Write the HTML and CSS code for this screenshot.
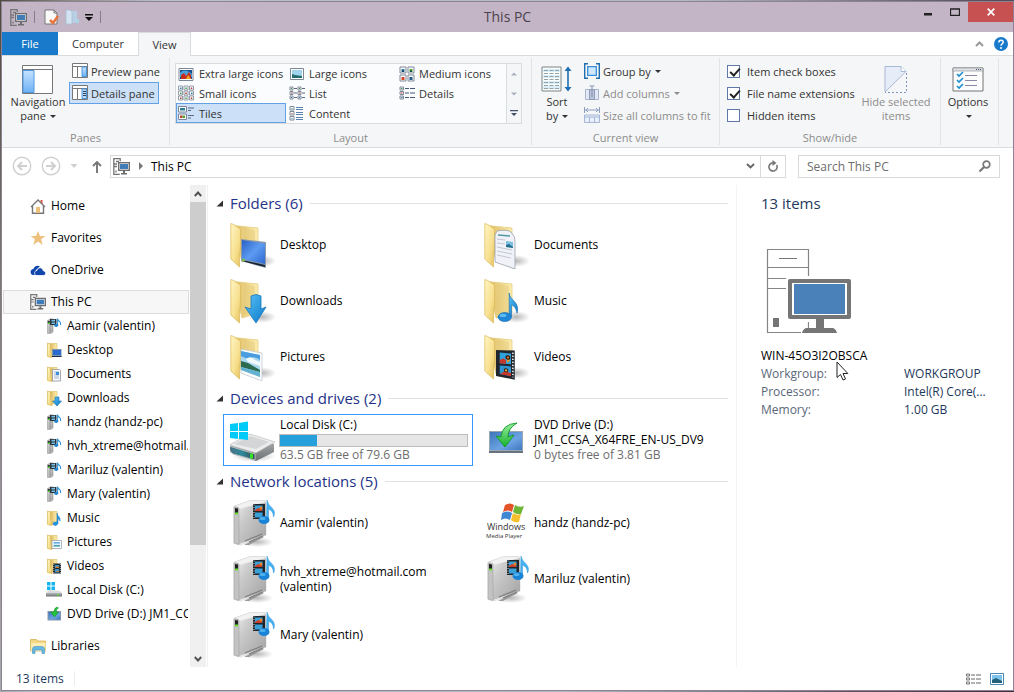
FILE: index.html
```html
<!DOCTYPE html>
<html lang="en">
<head>
<meta charset="utf-8">
<title>This PC</title>
<link rel="stylesheet" href="styles.css">
</head>
<body>
<svg class="defs" width="0" height="0" aria-hidden="true">
  <defs>
    <linearGradient id="gFront" x1="0" y1="0" x2="1" y2="1"><stop offset="0" stop-color="#fff6c4"/><stop offset=".6" stop-color="#f7df8e"/><stop offset="1" stop-color="#e3bf5c"/></linearGradient>
    <linearGradient id="gBack" x1="0" y1="0" x2="1" y2="0"><stop offset="0" stop-color="#d3b25a"/><stop offset=".5" stop-color="#eed587"/><stop offset="1" stop-color="#fbeeb0"/></linearGradient>
    <linearGradient id="gBlue" x1="0" y1="0" x2="1" y2="1"><stop offset="0" stop-color="#2a5fc4"/><stop offset=".5" stop-color="#5c9bf2"/><stop offset="1" stop-color="#2f68cf"/></linearGradient>
    <linearGradient id="gDvd" x1="0" y1="0" x2="1" y2="1"><stop offset="0" stop-color="#3d76bb"/><stop offset=".6" stop-color="#6ba3e3"/><stop offset="1" stop-color="#3f78c0"/></linearGradient>
    <linearGradient id="gArrow" x1="0" y1="0" x2="1" y2="1"><stop offset="0" stop-color="#5cc4f7"/><stop offset="1" stop-color="#0877c9"/></linearGradient>
    <linearGradient id="gGreen" x1="0" y1="0" x2="0" y2="1"><stop offset="0" stop-color="#9df0a0"/><stop offset="1" stop-color="#14b02c"/></linearGradient>
    <linearGradient id="gSky" x1="0" y1="0" x2="0" y2="1"><stop offset="0" stop-color="#3f9be0"/><stop offset=".5" stop-color="#d6effa"/><stop offset=".55" stop-color="#3d7f68"/><stop offset=".75" stop-color="#5aa7c4"/><stop offset="1" stop-color="#9ad6ea"/></linearGradient>
    <linearGradient id="gSilver" x1="0" y1="0" x2="1" y2="1"><stop offset="0" stop-color="#e8e8e8"/><stop offset=".3" stop-color="#cacaca"/><stop offset="1" stop-color="#a2a2a2"/></linearGradient>
    <linearGradient id="gDisk" x1="0" y1="0" x2="0" y2="1"><stop offset="0" stop-color="#b9bcbe"/><stop offset="1" stop-color="#6b6f72"/></linearGradient>
    <linearGradient id="gTeal" x1="0" y1="0" x2="1" y2="0"><stop offset="0" stop-color="#4d6f86"/><stop offset=".5" stop-color="#2d8a9c"/><stop offset="1" stop-color="#33474f"/></linearGradient>
    <linearGradient id="gPane" x1="0" y1="0" x2="0" y2="1"><stop offset="0" stop-color="#c5e1ff"/><stop offset="1" stop-color="#6db2f5"/></linearGradient>
    <radialGradient id="gShade"><stop offset="0" stop-color="#000" stop-opacity=".28"/><stop offset="1" stop-color="#000" stop-opacity="0"/></radialGradient>
    <g id="film">
      <path d="M0 0 15-1v27l-15-2z" fill="#20262c"/>
      <path d="M3 2h9v10H3z" fill="#2fa3dd"/><path d="M3 14h9v9l-9-1z" fill="#2f95d2"/>
      <path d="m3 9 3-2 2 2v3H3z" fill="#c8382a"/><path d="m8 5 3-1v5l-2 2z" fill="#e79a25"/><path d="m3 22 4-3 5 1v3z" fill="#c8382a"/>
      <circle cx="9.500" cy="6" r="2" fill="#23140f"/><circle cx="9.500" cy="6" r="1" fill="#e9732c"/><circle cx="8" cy="18" r="1.800" fill="#23140f"/><circle cx="8" cy="18" r="1" fill="#efb13a"/>
      <path d="M13.500 1v23" stroke="#e8eef2" stroke-width="1.300" stroke-dasharray="1.300 1.500"/>
    </g>
    <g id="note">
      <path d="M10 0c0 6 10 8 7 18-1-5-3-7-5-7v10h-2z" fill="url(#gArrow)" stroke="#1a6fb5" stroke-width=".6"/>
      <ellipse cx="6" cy="21.500" rx="6" ry="4" fill="#1f87d6" stroke="#1a6fb5" stroke-width=".6"/><ellipse cx="4.500" cy="20" rx="3" ry="1.500" fill="#5fbcf2"/>
    </g>
  </defs>
  <symbol id="pc" viewBox="0 0 17 17">
    <path d="M5 .7H.8v15.600h6M3 3.500h3M1 6h3M1 8.500h3M3 12.500v2" fill="none" stroke="#757575" stroke-width="1.300"/>
    <path d="M4.700.7h2.500v2.500" fill="none" stroke="#757575" stroke-width="1.300"/>
    <rect x="5.700" y="4.700" width="10.600" height="7.600" fill="#fff" stroke="#6d6d6d" stroke-width="1.400"/>
    <rect x="7" y="6" width="8" height="5" fill="#3f7cb8"/>
    <path d="M10 13h2v2h2v1.500H8V15h2z" fill="#6d6d6d"/>
  </symbol>
  <symbol id="folder" viewBox="0 0 48 48">
    <ellipse cx="32" cy="40" rx="14" ry="6" fill="url(#gShade)"/>
    <path d="M3 4.500 28 7v29l-16 5z" fill="url(#gBack)" stroke="#e2c977" stroke-width=".7"/>
    <path d="m14 7 11 2v27l-12 2z" fill="#dfc06c" opacity=".35"/>
    <path d="M.8 2.500C4 3 9 7 10.500 8.500V30l-1 2v14L.8 38z" fill="url(#gFront)" stroke="#dcb958" stroke-width=".7"/>
  </symbol>
  <symbol id="f-desktop" viewBox="0 0 48 48"><use href="#folder"/><path d="m11 18 25 3v26l-25-7z" fill="#8d99a6"/><path d="m12 19 23 3.500V43l-23-5z" fill="url(#gBlue)"/><path d="m12 39 23 5v2l-23-6z" fill="#152238"/><circle cx="13.500" cy="39" r="1.500" fill="#7bc34a"/></symbol>
  <symbol id="f-downloads" viewBox="0 0 48 48"><use href="#folder"/><path d="M21 19q5-3 10 0v13l5-2L26 46 15 30l6 2z" fill="url(#gArrow)" stroke="#1b78bd" stroke-width=".8"/></symbol>
  <symbol id="f-pictures" viewBox="0 0 48 48"><use href="#folder"/><path d="m11 16 21 4v28l-21-8z" fill="#fbfcfd" stroke="#bac4cc" stroke-width=".7"/><path d="m11 18 19 4v22l-19-7z" fill="#a9d8ef"/><path d="m11 18 19 4v5q-6-4-9-2t-10-2z" fill="#4a9ee0"/><path d="M16 26q5-4 9 1l5 2v4l-12-4z" fill="#f1f9fd"/><path d="m11 28 7 2 12 7v2l-19-5z" fill="#2d6b50"/><path d="m11 34 19 5v5l-19-7z" fill="#63b2cf"/></symbol>
  <symbol id="f-documents" viewBox="0 0 48 48"><use href="#folder"/><path d="M13 10q10-2 14 1 5 5 4 10v27l-20-7V14z" fill="#f1f2f8" stroke="#9aa2ad" stroke-width=".8"/><path d="m14 14 12 1" stroke="#4f9aa5" stroke-width="1.500"/><path d="m13 18 8 1m-8 3 8 1m-8 3 15 3m-15 1 15 3m-15 1 14 3" stroke="#c3c6d3"/><path d="m22 20 7 1v6l-7-1z" fill="#7dbfe0"/><path d="m22 24 3-1 4 3v1l-7-1z" fill="#246e8f"/></symbol>
  <symbol id="f-music" viewBox="0 0 48 48"><use href="#folder"/><use href="#note" transform="translate(14 16) scale(1.120)"/></symbol>
  <symbol id="f-videos" viewBox="0 0 48 48"><use href="#folder"/><use href="#film" transform="translate(12 17) skewY(5) scale(1.250 1.080)"/></symbol>
  <symbol id="f16" viewBox="0 0 16 16"><path d="M4 1.500h7V13l-5 1z" fill="url(#gBack)" stroke="#dfc36d" stroke-width=".7"/><path d="M1.500 1 4.500 2v8.500L6 12v3.500l-4.500-1z" fill="url(#gFront)" stroke="#d8b550" stroke-width=".7"/></symbol>
  <symbol id="s-desktop" viewBox="0 0 16 16"><use href="#f16"/><path d="M6 7h9.500v8H6z" fill="#7f93a8"/><path d="M7 8h8v5H7z" fill="#2b6ad0"/><path d="M6 14h9.500v1H6z" fill="#172c4e"/></symbol>
  <symbol id="s-documents" viewBox="0 0 16 16"><use href="#f16"/><path d="M6.500 3.500h7l1 1V15h-8z" fill="#f8f9fb" stroke="#8b94a3" stroke-width=".8"/><path d="M8 6h5M8 8h5M8 10h5M8 12h5" stroke="#9fb4d2"/><path d="M10 6h3v3h-3z" fill="#3b8ede"/></symbol>
  <symbol id="s-downloads" viewBox="0 0 16 16"><use href="#f16"/><path d="M9 7h4v4h2.500l-4.500 5-4.500-5H9z" fill="url(#gArrow)" stroke="#1b6fb0" stroke-width=".6"/></symbol>
  <symbol id="s-music" viewBox="0 0 16 16"><use href="#f16"/><path d="M11 3c0 3 4 4 3 8-.5-2-1-2-2-2v4c0 3-5 3-5 1s2-2 4-2z" fill="#2196e3" stroke="#1470b8" stroke-width=".5"/></symbol>
  <symbol id="s-pictures" viewBox="0 0 16 16"><use href="#f16"/><path d="M6 6.500h9.500v8H6z" fill="#fff" stroke="#8b98a5" stroke-width=".7"/><path d="M7.500 8h6.500v5H7.500z" fill="url(#gSky)"/></symbol>
  <symbol id="s-videos" viewBox="0 0 16 16"><use href="#f16"/><path d="M7 5.500h8v10H7z" fill="#20262c"/><path d="M9 7h4v3H9zm0 4h4v3.500H9z" fill="#3498d5"/><path d="m9 10 2-2 2 1v1zm1 4 2-2 1 2z" fill="#d2782a"/><path d="M14.300 6v9M7.800 6v9" stroke="#d7e1e8" stroke-width=".8" stroke-dasharray="1 1"/></symbol>
  <symbol id="s-server" viewBox="0 0 16 16"><path d="M1.500 2.500 4 .8h3V14l-2.500 1.600h-3z" fill="url(#gSilver)" stroke="#9a9a9a" stroke-width=".6"/><path d="M4 4v11" stroke="#8b8b8b" stroke-width=".7"/><path d="M1.800 2.800h2V5h-2z" fill="#2a2a2a"/><path d="M1.800 4.500h2V6h-2z" fill="#4dc935"/><path d="M4 1h6.500v6H4z" fill="#29333b"/><path d="M5.500 1.800H9V3.500H5.500zm0 2.700H9V6H5.500z" fill="#79c0e6"/><path d="M11.600.5v6.800M11.600 1q.4 1.500 2 2.500t.9 3.500" fill="none" stroke="#2b96e0" stroke-width="1.100"/><ellipse cx="10.200" cy="7.500" rx="2" ry="1.400" fill="#1c84d3"/></symbol>
  <symbol id="s-disk" viewBox="0 0 16 16"><path d="M1 0h3.500v3.500H1zm4.500 0H9v3.500H5.500zM1 4.500h3.500V8H1zm4.500 0H9V8H5.500z" fill="#12b5ee"/><path d="m3 8 11 1 2 2H0z" fill="#d8dadb"/><path d="M0 11h16v3.500H0z" fill="url(#gDisk)"/><path d="M11 12h2v1.500h-2z" fill="#5fe03c"/></symbol>
  <symbol id="s-dvd" viewBox="0 0 16 16"><path d="M1.500 5H15v9.500H1.500z" fill="#8797a8"/><path d="M2.500 6H14v7.500H2.500z" fill="url(#gDvd)"/><path d="M11 1Q8 2 8 6H4.500l4 5 4-5H10Q10 3 12.500 2z" fill="#23c53b" stroke="#0e8b23" stroke-width=".5"/></symbol>
  <symbol id="server" viewBox="0 0 48 48">
    <ellipse cx="27" cy="43" rx="16" ry="5" fill="url(#gShade)"/>
    <path d="m14 46 18-9 2 1-15 8z" fill="#9a9a9a"/>
    <path d="M4 7 20 1.500h15l1 3.500v31L10 46l-6-1.500z" fill="#f2f2f2" stroke="#cfcfcf" stroke-width=".6"/>
    <path d="M9 10 36 3v33L9 45z" fill="url(#gSilver)"/>
    <path d="M4 8q2.500-1 5 1v36.500L4 44z" fill="#c3c3c3" stroke="#999" stroke-width=".5"/>
    <path d="m5 9 3 .5V15H5z" fill="#1f1f1f"/><path d="M5 13.500h3v2H5z" fill="#66df28"/>
    <path d="m15 42 17-7m-13 8 14-6" stroke="#7d7d7d" stroke-width="1.200"/>
    <path d="M23 5h12v15H23z" fill="#1e262c"/><path d="M25 6.500h7.500v5.500H25zm0 7h7.500v5H25z" fill="#3aa0d8"/><path d="m25 11 3-2 4 1v2h-7z" fill="#cf4028"/><circle cx="31" cy="9" r="1.500" fill="#e7832a"/><path d="M24 5.500v14" stroke="#e1e8ec" stroke-dasharray="1 1.500"/>
    <path d="M37 1q.5 4 5 8 4 4 1.500 9 0-6-5-8v12h-2z" fill="#45b3f3" stroke="#2a90d6" stroke-width=".5"/><ellipse cx="34" cy="21" rx="5.500" ry="4" fill="#1983d6"/><ellipse cx="32.500" cy="19.500" rx="3" ry="1.500" fill="#4fb2ee"/>
  </symbol>
</svg>

<div class="window">
  <header class="titlebar">
    <div class="quick">
      <svg width="17" height="17"><use href="#pc"/></svg>
      <i class="bar"></i>
      <button class="plain" aria-label="Properties"><svg width="15" height="16"><path d="M1 1h9l3 3v11H1z" fill="#fafafa" stroke="#777"/><path d="M10 1v3h3" fill="none" stroke="#777"/><path d="m6 11 3 3 5-7" fill="none" stroke="#e8743b" stroke-width="2.500"/></svg></button>
      <button class="plain" aria-label="New folder"><svg width="14" height="16"><path d="M5 2h7v12H5z" fill="#b9cfe4"/><path d="M1 1h4l2 2v12H1z" fill="#d4e3f2" stroke="#a7bdd3" stroke-width=".8"/><path d="M11 10h3v4h-3z" fill="#a9d5e6"/></svg></button>
      <button class="plain caret" aria-label="Customize"><svg width="8" height="7"><path d="M0 0h8v1.500H0zM0 3h8L4 7z" fill="#111"/></svg></button>
      <i class="bar"></i>
    </div>
    <h1>This PC</h1>
    <div class="controls">
      <button class="plain" aria-label="Minimize"><svg width="10" height="10"><path d="M1 6h8v2.500H1z" fill="#222"/></svg></button>
      <button class="plain" aria-label="Maximize"><svg width="10" height="8"><path d="M.5 1h9v6.500h-9zM0 1h10" fill="none" stroke="#222" stroke-width="1.300"/></svg></button>
      <button class="close" aria-label="Close"><svg width="8" height="8"><path d="m.7.7 6.600 6.600M7.300.7.700 7.300" stroke="#fff" stroke-width="1.700"/></svg></button>
    </div>
  </header>

  <nav class="tabs">
    <button class="tab file">File</button>
    <button class="tab computer">Computer</button>
    <button class="tab active">View</button>
    <div class="tabend">
      <button class="plain" aria-label="Collapse ribbon"><svg width="9" height="6"><path d="m1 5 3.500-3.500L8 5" fill="none" stroke="#999" stroke-width="2"/></svg></button>
      <button class="plain" aria-label="Help"><svg width="14" height="14"><circle cx="7" cy="7" r="7" fill="#1979ca"/><path d="M4.800 5.500C4.800 2.300 9.300 2.500 9.200 5.200 9.200 6.800 7 6.800 7 8.800" fill="none" stroke="#fff" stroke-width="1.500"/><circle cx="7" cy="11" r="1" fill="#fff"/></svg></button>
    </div>
  </nav>

  <section class="ribbon">
    <div class="group panes">
      <div class="body">
        <button class="big"><svg width="32" height="30"><path d="M0 1h31v28H0z" fill="#fff"/><path d="M.5.5h30v28H.5zM0 4.500h31" fill="#fff" stroke="#777"/><path d="M1 5.500h11v22H1z" fill="url(#gPane)" stroke="#4e98e0"/></svg><span>Navigation<br>pane <b class="dn"></b></span></button>
        <div class="rows">
          <button class="row"><svg width="16" height="16"><path d="M.5.5h15v14H.5zM.5 3.500h15M5.500 3.500v11" fill="#fff" stroke="#777"/><path d="M10 4h4.500v9.500H10z" fill="url(#gPane)" stroke="#4e98e0"/></svg>Preview pane</button>
          <button class="row on"><svg width="16" height="16"><path d="M.5.5h15v14H.5zM.5 3.500h15M5.500 3.500v11" fill="#fff" stroke="#777"/><path d="M10 4h4.500v9.500H10z" fill="#b9dafb" stroke="#4e98e0"/><path d="M11 6.500h3m-3 2h3m-3 2h3" stroke="#345"/></svg>Details pane</button>
        </div>
      </div>
      <h2>Panes</h2>
    </div>
    <div class="group layout">
      <div class="gallery">
        <div class="cells">
          <button><svg width="16" height="16"><path d="M1 2.500h14v12H1z" fill="#fff" stroke="#7c8798"/><path d="M2 4h12v9H2z" fill="#1b4f8e"/><path d="M2 7c3-4 8-3 12 1v3H2z" fill="#48a3dd"/><path d="M3 13V9l3-2 2 3 3-4 2 3v4z" fill="#c62d20"/><path d="m8 13 2-4 3 4z" fill="#f2a71f"/></svg>Extra large icons</button>
          <button><svg width="16" height="16"><path d="M1.500 2.500h13v11h-13z" fill="#fff" stroke="#7c8798"/><path d="M3 4h10v8H3z" fill="#9fd4ee"/><path d="m3 8 3 1 7 1v2H3z" fill="#256b6b"/></svg>Large icons</button>
          <button><svg width="16" height="16"><path d="M1 1h6v6H1zM9 1h6v6H9zM1 9h6v6H1zM9 9h6v6H9z" fill="#fff" stroke="#7c8798"/><path d="M2.500 3h3v3h-3z" fill="#287dab"/><path d="M10.500 3h3v3h-3z" fill="#4cae2e"/><path d="M2.500 11h3v3h-3z" fill="#d4462a"/><path d="M10.500 11h3v3h-3z" fill="#245789"/><path d="M3 4.500h2v1.500H3zm8 0h2v1.500h-2z" fill="#193e50"/></svg>Medium icons</button>
          <button><svg width="16" height="16"><path d="M.5 1h4v4h-4zm5.500 0h4v4H6zm5.500 0h4v4h-4zM.5 6h4v4h-4zM6 6h4v4H6zm5.500 0h4v4h-4zM.5 11h4v4h-4zM6 11h4v4H6zm5.500 0h4v4h-4z" fill="#fff" stroke="#7c8798" stroke-width=".8"/><path d="M2 2.500h1.500V4H2zm11 5h1.500V9H13z" fill="#287dab"/><path d="M7.300 2.500h1.500V4H7.300zM2 7.500h1.500V9H2zm5.300 5h1.500V14H7.300z" fill="#3f9e48"/><path d="M12.800 2.500h1.500V4h-1.500zM7.300 7.500h1.500V9H7.300zM2 12.500h1.500V14H2zm10.800 0h1.500V14h-1.500z" fill="#b33a29"/></svg>Small icons</button>
          <button><svg width="16" height="16"><path d="M1 2h3v3H1zm8 0h3v3H9zM1 6.500h3v3H1zm8 0h3v3H9zM1 11h3v3H1zm8 0h3v3H9z" fill="#fff" stroke="#7c8798"/><path d="M5 3.500h3m5 0h3M5 8h3m5 0h3M5 12.500h3m5 0h3" stroke="#5d6b80"/><path d="M2 3h1v1H2zm8 0h1v1h-1z" fill="#3f9e48"/><path d="M2 7.500h1v1H2zm8 0h1v1h-1z" fill="#b33a29"/><path d="M2 12h1v1H2zm8 0h1v1h-1z" fill="#287dab"/></svg>List</button>
          <button><svg width="16" height="16"><path d="M1 2h3.500v3H1zm0 4.500h3.500v3H1zM1 11h3.500v3H1z" fill="#fff" stroke="#7c8798"/><path d="M6 3.500h4m1 0h5M6 8h4m1 0h5M6 12.500h4m1 0h5" stroke="#44587a"/><path d="M2 3h1.500v1H2z" fill="#3f9e48"/><path d="M2 7.500h1.500v1H2z" fill="#d02020"/><path d="M2 12h1.500v1H2z" fill="#287dab"/></svg>Details</button>
          <button class="on"><svg width="16" height="16"><path d="M.5 1.500h8v5.500h-8zm0 7.500h8v5.500h-8z" fill="#fff" stroke="#7c8798"/><path d="M2 3h5v2.500H2z" fill="#2d7f95"/><path d="M2 10.500h2.500V13H2z" fill="#c33b28"/><path d="M4.500 10.500H7V13H4.500z" fill="#49a934"/><path d="M10 3h6m-6 2.500h3m-3 5h6M10 13h3" stroke="#5d6b80"/></svg>Tiles</button>
          <button><svg width="16" height="16"><path d="M1 1.500h4v3.500H1zM1 6.500h4V10H1zm0 5h4V15H1z" fill="#fff" stroke="#7c8798"/><path d="M7 2.500h7m-7 2h7m-7 3h7m-7 2h7m-7 3h7m-7 2h7" stroke="#5580b0"/><path d="M2.500 3h1v1h-1z" fill="#3f9e48"/><path d="M2.500 8h1v1h-1z" fill="#b33a29"/><path d="M2.500 13h1v1h-1z" fill="#287dab"/></svg>Content</button>
        </div>
        <div class="spin">
          <button class="plain" aria-label="Scroll up"><svg width="6" height="4"><path d="M0 3.500h6L3 .5z" fill="#a9b1bd"/></svg></button>
          <button class="plain" aria-label="Scroll down"><svg width="6" height="4"><path d="M0 .5h6L3 3.500z" fill="#a9b1bd"/></svg></button>
          <button class="plain" aria-label="More layouts"><svg width="8" height="7"><path d="M0 0h8v1.200H0zM1 3h6L4 6z" fill="#44546a"/></svg></button>
        </div>
      </div>
      <h2>Layout</h2>
    </div>
    <div class="group current">
      <div class="body">
        <button class="big"><svg width="32" height="30"><path d="M1 2h19v24H1z" fill="#fdfdf8" stroke="#7b8587"/><path d="M2 4h17v3H2zm0 6h17v3H2zm0 6h17v3H2zm0 5h17v3H2z" fill="#d8eef8"/><path d="M3 5.500h15M3 8.500h15M3 11.500h15M3 14.500h15M3 17.500h15M3 20.500h15M3 23.500h15" stroke="#93a2ab" stroke-dasharray="4 1.500"/><path d="M27 4v20" stroke="#1f6fb2" stroke-width="1.600"/><path d="M23.500 6 27 1.500 30.500 6zM23.500 22l3.500 4.500 3.500-4.500z" fill="#1f6fb2"/></svg><span>Sort<br>by <b class="dn"></b></span></button>
        <div class="rows">
          <button class="row"><svg width="16" height="16"><path d="M4 .7H.7v14.600H4M12 .7h3.300v14.600H12" fill="none" stroke="#1f6fb2" stroke-width="1.400"/><path d="M3.700 3.700h8.600v8.600H3.700z" fill="#cfe8fb" stroke="#3a8dd6" stroke-width="1.300"/></svg>Group by <b class="dn"></b></button>
          <button class="row" disabled><svg width="16" height="16"><path d="M1.500 4.500h13v10h-13z" fill="#e4eaf5" stroke="#a9b6cf"/><path d="M5.500 4.500h5v10h-5z" fill="#b9c3d6" stroke="#8f9db8"/><path d="M8 1v11M5.500 1h5" stroke="#8695b2"/></svg>Add columns <b class="dn"></b></button>
          <button class="row" disabled><svg width="16" height="16"><path d="M.5 0v6m15-6v6M1 3h14M4 1 2 3l2 2m8-4 2 2-2 2" fill="none" stroke="#8ba0c2"/><path d="M.5 8h15v7.500H.5zM.5 10h15M5.500 10v5m5-5v5" fill="#e8effa" stroke="#a6b8d6"/></svg>Size all columns to fit</button>
        </div>
      </div>
      <h2>Current view</h2>
    </div>
    <div class="group show">
      <div class="body">
        <div class="rows">
          <label class="row"><input type="checkbox" checked>Item check boxes</label>
          <label class="row"><input type="checkbox" checked>File name extensions</label>
          <label class="row"><input type="checkbox">Hidden items</label>
        </div>
        <button class="big" disabled><svg width="24" height="30"><path d="M1 1.500h16l5 5L1 27z" fill="#e6edf8" stroke="#a9b9d6"/><path d="M17 1.500v5h5" fill="#fff" stroke="#a9b9d6"/><path d="M22.500 8v19.500H1" fill="none" stroke="#7f92b8" stroke-dasharray="2 2"/></svg><span>Hide selected<br>items</span></button>
      </div>
      <h2>Show/hide</h2>
    </div>
    <div class="group options">
      <div class="body">
        <button class="big"><svg width="32" height="30"><path d="M1 3h30v23H1z" fill="#fcfcfc" stroke="#747474"/><path d="M1 3h30v3H1z" fill="#dfe3ea" stroke="#8a8a8a" stroke-width=".6"/><path d="M24 4.500h6" stroke="#44546a" stroke-dasharray="1 1"/><path d="m5 9 2 2 4-4M5 15l2 2 4-4M5 21l2 2 4-4" fill="none" stroke="#1f8fcf" stroke-width="1.700"/><path d="M13 10.500h12m-12 5h12m-12 5h12" stroke="#8e86a6"/></svg><span>Options<br><b class="dn"></b></span></button>
      </div>
    </div>
  </section>

  <div class="address">
    <button class="plain" aria-label="Back"><svg width="20" height="20"><circle cx="10" cy="10" r="8.700" fill="none" stroke="#cfcfcf" stroke-width="1.400"/><path d="M15 10H6m4-4-4 4 4 4" fill="none" stroke="#cfcfcf" stroke-width="1.900"/></svg></button>
    <button class="plain" aria-label="Forward"><svg width="20" height="20"><circle cx="10" cy="10" r="8.700" fill="none" stroke="#cfcfcf" stroke-width="1.400"/><path d="M5 10h9m-4-4 4 4-4 4" fill="none" stroke="#cfcfcf" stroke-width="1.900"/></svg></button>
    <button class="plain recent" aria-label="Recent locations"><svg width="8" height="5"><path d="M.5 0h7L4 4z" fill="#cfcfcf"/></svg></button>
    <button class="plain up" aria-label="Up"><svg width="10" height="13"><path d="M5 13V2M1 6l4-4 4 4" fill="none" stroke="#777" stroke-width="1.900"/></svg></button>
    <div class="path">
      <svg width="17" height="17"><use href="#pc"/></svg>
      <svg width="5" height="8"><path d="M1 0v8l4-4z" fill="#777"/></svg>
      <button class="plain crumb">This PC</button>
      <button class="plain" aria-label="Previous locations"><svg width="9" height="6"><path d="m1 1 3.500 3.500L8 1" fill="none" stroke="#666" stroke-width="1.900"/></svg></button>
      <button class="plain refresh" aria-label="Refresh"><svg width="12" height="12"><path d="M9.600 5A4.100 4.100 0 1 1 6 2.900" fill="none" stroke="#777" stroke-width="1.600"/><path d="M5.500 0 9.500 3l-4 3z" fill="#777"/></svg></button>
    </div>
    <div class="search">
      <input type="text" placeholder="Search This PC" aria-label="Search This PC">
      <svg width="12" height="12"><circle cx="7.500" cy="4.500" r="3.300" fill="none" stroke="#777" stroke-width="1.700"/><path d="m5 7-4.500 4.500" stroke="#777" stroke-width="2.200"/></svg>
    </div>
  </div>

  <main class="main">
    <nav class="tree">
      <ul>
        <li><a href="#"><svg width="16" height="16"><path d="M11.500 2v4" stroke="#d9573a" stroke-width="2"/><path d="M2.500 8v7.300h11V8M1 9l7-7 7 7" fill="#fff" stroke="#777" stroke-width="1.400"/><path d="M6 9h4v6H6z" fill="#ecc27b"/></svg>Home</a></li>
        <li><a href="#"><svg width="16" height="16"><path d="m8 1 2 5h5.300l-4.200 3.300L12.700 15 8 11.600 3.300 15l1.600-5.700L.7 6H6z" fill="#edc07b"/></svg>Favorites</a></li>
        <li><a href="#"><svg width="16" height="16"><path d="M1.500 12.500C-.5 10 1 7 3.500 7 4 4.500 7 2.500 10 4.500L6 8v5H3z" fill="#1147ad"/><path d="M5.500 13c-2-2-.5-4.500 1.500-4.500C7.500 5 12.500 4.500 13 8.500c3 .5 3.500 4 1 5H6z" fill="#1147ad" stroke="#fff" stroke-width=".8"/></svg>OneDrive</a></li>
        <li class="selected"><a href="#"><svg width="16" height="16"><use href="#pc"/></svg>This PC</a></li>
      </ul>
      <ul class="children">
        <li><a href="#"><svg width="16" height="16"><use href="#s-server"/></svg>Aamir (valentin)</a></li>
        <li><a href="#"><svg width="16" height="16"><use href="#s-desktop"/></svg>Desktop</a></li>
        <li><a href="#"><svg width="16" height="16"><use href="#s-documents"/></svg>Documents</a></li>
        <li><a href="#"><svg width="16" height="16"><use href="#s-downloads"/></svg>Downloads</a></li>
        <li><a href="#"><svg width="16" height="16"><use href="#s-server"/></svg>handz (handz-pc)</a></li>
        <li><a href="#"><svg width="16" height="16"><use href="#s-server"/></svg>hvh_xtreme@hotmail.com</a></li>
        <li><a href="#"><svg width="16" height="16"><use href="#s-server"/></svg>Mariluz (valentin)</a></li>
        <li><a href="#"><svg width="16" height="16"><use href="#s-server"/></svg>Mary (valentin)</a></li>
        <li><a href="#"><svg width="16" height="16"><use href="#s-music"/></svg>Music</a></li>
        <li><a href="#"><svg width="16" height="16"><use href="#s-pictures"/></svg>Pictures</a></li>
        <li><a href="#"><svg width="16" height="16"><use href="#s-videos"/></svg>Videos</a></li>
        <li><a href="#"><svg width="16" height="16"><use href="#s-disk"/></svg>Local Disk (C:)</a></li>
        <li><a href="#"><svg width="16" height="16"><use href="#s-dvd"/></svg>DVD Drive (D:) JM1_CCSA</a></li>
      </ul>
      <ul>
        <li><a href="#"><svg width="16" height="16"><path d="M.5 1.500h6l1 1.500h8v10H.5z" fill="#f3d883" stroke="#d4b455" stroke-width=".8"/><path d="M1 5h14.500v8H1z" fill="#fbeeb5"/><path d="M2.500 15.500V11q0-2.500 3-2.500h6q3 0 3 2.500v4.500H12V12H5v3.500z" fill="#69b9e3" stroke="#3f8fc0" stroke-width=".6"/></svg>Libraries</a></li>
      </ul>
    </nav>
    <div class="scroll">
      <button class="plain" aria-label="Scroll up"><svg width="8" height="6"><path d="m.8 5 3.200-3.500L7.200 5" fill="none" stroke="#505050" stroke-width="1.900"/></svg></button>
      <div class="thumb"></div>
      <button class="plain" aria-label="Scroll down"><svg width="8" height="6"><path d="m.8 1 3.200 3.500L7.200 1" fill="none" stroke="#505050" stroke-width="1.900"/></svg></button>
    </div>

    <section class="files">
      <h2><svg width="7" height="7"><path d="M7 .5V6.500H.5z" fill="#333"/></svg>Folders (6)</h2>
      <div class="tiles">
        <button class="tile"><svg width="48" height="48"><use href="#f-desktop"/></svg><span>Desktop</span></button>
        <button class="tile"><svg width="48" height="48"><use href="#f-documents"/></svg><span>Documents</span></button>
        <button class="tile"><svg width="48" height="48"><use href="#f-downloads"/></svg><span>Downloads</span></button>
        <button class="tile"><svg width="48" height="48"><use href="#f-music"/></svg><span>Music</span></button>
        <button class="tile"><svg width="48" height="48"><use href="#f-pictures"/></svg><span>Pictures</span></button>
        <button class="tile"><svg width="48" height="48"><use href="#f-videos"/></svg><span>Videos</span></button>
      </div>
      <h2><svg width="7" height="7"><path d="M7 .5V6.500H.5z" fill="#333"/></svg>Devices and drives (2)</h2>
      <div class="tiles">
        <button class="tile focus">
          <svg width="48" height="48"><ellipse cx="24" cy="40" rx="22" ry="6" fill="url(#gShade)"/><path d="m-1 30 20-10 25 8v8L26 45-1 36z" fill="url(#gDisk)"/><path d="m-1 29 21-11 25 8-19 11z" fill="#ececec" stroke="#b5b5b5" stroke-width=".6"/><path d="m4 28 17-8 18 6-13 7z" fill="#d3d5d6"/><path d="m-1 30 26 8v6L3 38q-4-2-4-8z" fill="url(#gTeal)" stroke="#b9bdbf"/><path d="M20 37.500h3v5h-3z" fill="#35e325"/><path d="M0 8 8 7v8H0zm9-1 9-1.500V15H9zM0 16h8v7l-8-1zm9 0h9v8l-9-1z" fill="#00caf7"/></svg>
          <span>Local Disk (C:)<progress value="20" max="100" aria-label="Used space"></progress><small>63.5 GB free of 79.6 GB</small></span></button>
        <button class="tile">
          <svg width="48" height="48"><path d="M5 15h34v22H5z" fill="#9aa6b1"/><path d="M6 16h32v18H6z" fill="url(#gDvd)"/><path d="M5 35h34v2H5z" fill="#66737e"/><path d="M33 7q-15 1-16 14l-5-1 9 11 9-12-6 2q0-9 9-14z" fill="url(#gGreen)" stroke="#109a26" stroke-width=".9"/></svg>
          <span>DVD Drive (D:)<br>JM1_CCSA_X64FRE_EN-US_DV9<small>0 bytes free of 3.81 GB</small></span></button>
      </div>
      <h2><svg width="7" height="7"><path d="M7 .5V6.500H.5z" fill="#333"/></svg>Network locations (5)</h2>
      <div class="tiles">
        <button class="tile"><svg width="48" height="48"><use href="#server"/></svg><span>Aamir (valentin)</span></button>
        <button class="tile">
          <svg class="wmp" width="48" height="48"><path d="M21 6q5-3 9 0l-2 7q-4-3-9 0z" fill="#e4532a"/><path d="M31 6q4 3 9 1l-3 8q-4 1-8-2z" fill="#6fb536"/><path d="M18 14q5-3 10 0l-2 7q-5-3-9 0z" fill="#3f87d3"/><path d="M29 14q4 3 8 1l-2 8q-5 1-8-2z" fill="#f6bf2c"/><text x="3" y="31" font-size="9">Windows</text><text x="2" y="39" font-size="6">Media Player</text></svg>
          <span>handz (handz-pc)</span></button>
        <button class="tile"><svg width="48" height="48"><use href="#server"/></svg><span>hvh_xtreme@hotmail.com<br>(valentin)</span></button>
        <button class="tile"><svg width="48" height="48"><use href="#server"/></svg><span>Mariluz (valentin)</span></button>
        <button class="tile"><svg width="48" height="48"><use href="#server"/></svg><span>Mary (valentin)</span></button>
      </div>
    </section>

    <aside class="details">
      <h2>13 items</h2>
      <svg width="86" height="86"><path d="M1.500 1.500h41v83h-41zM1 19.500h42M1 30.500h42M1 40.500h42" fill="#fff" stroke="#858585" stroke-width="1.200"/><path d="M13 10.500h18" stroke="#757575"/><path d="M7 70h6v9H7z" fill="#757575"/><path d="M20 28h66v46H54v6h19v6H35v-6h8v-6H20z" fill="#fff"/><path d="M42.500 74v5" stroke="#858585"/><rect x="22" y="31" width="63" height="40" rx="2" fill="#757575"/><path d="M26 35h55v32H26z" fill="#fff"/><path d="M28 36h51v30H28z" fill="#4a81b8"/><path d="M50 71h8v9h9q3 1 4 5H36q1-4 4-5h10z" fill="#757575"/></svg>
      <h3>WIN-45O3I2OBSCA</h3>
      <dl>
        <dt>Workgroup:</dt><dd>WORKGROUP</dd>
        <dt>Processor:</dt><dd>Intel(R) Core(...</dd>
        <dt>Memory:</dt><dd>1.00 GB</dd>
      </dl>
      <svg class="cursor" width="13" height="20"><path d="M1 1v15.500l3.500-3 2.500 5.500 2.500-1-2.500-5.500h4.800z" fill="#fff" stroke="#222"/></svg>
    </aside>
  </main>

  <footer class="status">
    <span>13 items</span>
    <div>
      <button class="plain" aria-label="Details view"><svg width="16" height="12"><path d="M.5 1h3v2h-3zm0 4h3v2h-3zm0 4h3v2h-3z" fill="#fff" stroke="#777"/><path d="M5 2h4m1 0h5M5 6h4m1 0h5M5 10h4m1 0h5" stroke="#666"/></svg></button>
      <button class="plain" aria-label="Thumbnail view"><svg width="14" height="12"><path d="M.5.5h13v11H.5z" fill="#fff" stroke="#4a86b8"/><path d="M2 2h10v8H2z" fill="#7ec3ea"/><path d="m2 7 4-2 6 3v2H2z" fill="#24607a"/></svg></button>
    </div>
  </footer>
</div>
</body>
</html>
```

FILE: styles.css
```css
* { box-sizing: border-box; }
html, body { height: 100%; margin: 0; }
body {
  display: flex;
  padding: 1px 0 1px 1px;
  overflow: hidden;
  background: linear-gradient(100deg, #4d4a3c 0, #8b8a80 6%, #b9c0c8 14%, #b3bac4 60%, #5c5560 85%, #3a3038 100%);
  font: 12px/15px "Open Sans", "Noto Sans", sans-serif;
  color: #000;
}
h1, h2, h3, ul, dl, dd { margin: 0; padding: 0; font-weight: normal; }
ul { list-style: none; }
button { font: inherit; color: inherit; border: 0; padding: 0; background: none; text-align: left; }
svg { display: block; flex: none; }
.defs { position: absolute; }
.plain { display: flex; align-items: center; justify-content: center; }

.window { flex: 1; display: flex; flex-direction: column; min-width: 0; border: 1px solid #8f8195; background: #fff; }

.titlebar { display: grid; grid-template-columns: 1fr auto 1fr; height: 30px; background: #c4b5c6; }
.titlebar h1 { font-size: 14px; line-height: 30px; color: #4b434d; }
.quick { display: flex; align-items: center; gap: 7px; padding-left: 8px; }
.quick .bar { width: 1px; height: 12px; background: #867b88; }
.quick .plain + .plain { margin-left: -1px; }
.quick .bar:first-of-type { margin-right: 2px; }
.controls { display: flex; justify-content: flex-end; align-items: flex-start; height: 20px; }
.controls .plain { width: 27px; height: 20px; }
.controls .close { display: flex; align-items: center; justify-content: center; width: 45px; height: 20px; background: #c75050; }

.tabs { display: flex; height: 24px; border-bottom: 1px solid #dadbdc; font-size: 11px; color: #333; }
.tab { height: 24px; text-align: center; }
.file { width: 56px; height: 23px; background: #1979ca; color: #fff; }
.computer { width: 80px; height: 23px; }
.active { width: 53px; border: 1px solid #dadbdc; border-bottom: 0; background: #f5f6f7; }
.tabend { display: flex; align-items: center; gap: 10px; margin-left: auto; padding-right: 5px; }

.ribbon { display: flex; padding: 2px 0; border-bottom: 1px solid #dadbdc; background: #f5f6f7; font-size: 11px; color: #333; }
.group { display: flex; flex-direction: column; height: 87px; border-right: 1px solid #e2e3e4; }
.group h2 { margin-top: auto; font-size: 11px; line-height: 14px; text-align: center; color: #8c8c8c; }
.body { display: flex; }
.panes { width: 168px; }
.layout { width: 362px; }
.current { width: 188px; }
.show { width: 221px; }
.options { width: 58px; }
.rows { display: flex; flex-direction: column; padding-top: 2px; }
.row { display: flex; align-items: center; gap: 3px; height: 22px; padding: 0 2px; border: 1px solid transparent; white-space: nowrap; }
.on { border: 1px solid #62a2e4; background: #cce1f8; }
button:disabled { color: #8c8c8c; }
.big { display: flex; flex-direction: column; align-items: center; gap: 0; padding-top: 7px; text-align: center; line-height: 14px; white-space: nowrap; }
.panes .big { width: 60px; margin-left: 6px; }
.panes .rows { padding-left: 1px; }
.panes .row { width: 90px; }
.current .big { width: 46px; margin-left: 2px; }
.current .rows { padding-left: 1px; }
.show .big { width: 72px; margin-left: auto; margin-right: 8px; }
.options .big { width: 54px; }
.dn { display: inline-block; margin-left: 1px; border: 3px solid transparent; border-top-color: currentColor; border-bottom: 0; vertical-align: 2px; }
.show .rows { padding-left: 6px; }
.show .row { gap: 7px; padding: 0; }
.row input { appearance: none; width: 13px; height: 13px; margin: 0; border: 1px solid #5f78a8; background: #fff; }
.row input:checked::after { content: ""; display: block; width: 8px; height: 4px; margin: 2px; border: solid #222; border-width: 0 0 2px 2px; transform: rotate(-48deg); }

.gallery { display: flex; height: 61px; margin: 5px 9px 0 5px; border: 1px solid #dadbdc; background: #fbfcfd; }
.cells { flex: 1; display: grid; grid-template-columns: repeat(3, 110px); grid-template-rows: 19px 20px 20px; }
.cells button { display: flex; align-items: center; gap: 4px; padding-left: 2px; border: 1px solid transparent; white-space: nowrap; }
.cells button:nth-child(3n+1) { gap: 5px; padding-left: 1px; }
.cells .on { border-color: #62a2e4; }
.spin { display: grid; grid-template-rows: 20px 20px 19px; width: 15px; border-left: 1px solid #dadbdc; background: #f5f6f7; }

.address { display: flex; align-items: center; height: 36px; margin-bottom: 1px; padding: 0 13px 0 10px; }
.address > .plain + .plain { margin-left: 9px; }
.address .recent { margin: 0 5px 0 1px; }
.address .up { margin-right: 8px; }
.path, .search { display: flex; align-items: center; height: 23px; border: 1px solid #d9d9d9; }
.path { flex: 1; gap: 8px; padding-left: 2px; }
.path .crumb { flex: 1; justify-content: flex-start; }
.path .refresh { width: 25px; height: 21px; margin-left: -3px; border-left: 1px solid #d9d9d9; }
.search { width: 202px; margin-left: 12px; padding: 0 8px; }
.search input { flex: 1; min-width: 0; padding: 0; border: 0; outline: 0; font: inherit; }
.search input::placeholder { color: #6d6d6d; }

.main { flex: 1; display: flex; min-height: 0; }
.tree { display: flex; flex-direction: column; width: 188px; padding: 9px 1px 0; overflow: hidden; }
.tree ul { display: flex; flex-direction: column; gap: 8px; }
.tree .children { gap: 0; margin-bottom: 8px; }
.tree li { flex: none; height: 24px; border: 1px solid transparent; }
.tree a { display: flex; align-items: center; gap: 5px; height: 22px; padding: 0 0 1px 26px; color: #000; text-decoration: none; white-space: nowrap; overflow: hidden; }
.tree .children a { padding-left: 42px; }
.tree .selected { border-color: #dcdcdc; background: #f7f7f7; }
.scroll { display: flex; flex-direction: column; width: 16px; background: #f0f0f0; }
.scroll .plain { height: 17px; width: 16px; }
.thumb { height: 343px; background: #cdcdcd; margin-bottom: auto; }

.files { flex: 1; min-width: 0; margin-left: 1px; padding: 5px 8px 0 8px; border-left: 1px solid #f0f0f0; }
.files h2 { display: flex; align-items: center; gap: 7px; height: 27px; font-size: 15px; line-height: 27px; color: #1e3287; white-space: nowrap; }
.files h2::after { content: ""; flex: 1; height: 1px; background: #e2e2e2; }
.tiles { display: grid; grid-template-columns: repeat(auto-fill, 250px); gap: 4px; padding: 2px 0 2px 7px; }
.tile { display: flex; align-items: center; gap: 2px; height: 52px; padding-left: 6px; border: 1px solid transparent; white-space: nowrap; }
.tile > span { padding-bottom: 1px; }
.focus { border-color: #3399ff; }
.tile small { display: block; font-size: 12px; line-height: 16px; color: #6d6d6d; }
.wmp { font-family: "Open Sans", sans-serif; fill: #333; }
progress { display: block; appearance: none; width: 189px; height: 13px; margin: 2px 0 0 -1px; border: 1px solid #bcbcbc; background: #e6e6e6; }
progress::-webkit-progress-bar { background: #e6e6e6; }
progress::-webkit-progress-value { background: #26a0da; }

.details { position: relative; width: 277px; padding: 5px 0 0 24px; border-left: 1px solid #f3f3f3; }
.details h2 { height: 27px; font-size: 15px; line-height: 27px; color: #1e395b; }
.details > svg { margin: 31px 0 0 5px; }
.details h3 { margin-top: 13px; font-size: 12px; line-height: 18px; }
.details dl { display: grid; grid-template-columns: 143px 1fr; line-height: 18px; }
.details dt { color: #5a6779; }
.details dd { color: #1e395b; }
.details .cursor { position: absolute; left: 99px; top: 176px; margin: 0; }

.status { display: flex; align-items: center; justify-content: space-between; height: 23px; padding: 0 9px 0 14px; color: #1e395b; }
.status span { padding-right: 10px; border-right: 1px solid #eee; }
.status div { display: flex; gap: 8px; }
```
